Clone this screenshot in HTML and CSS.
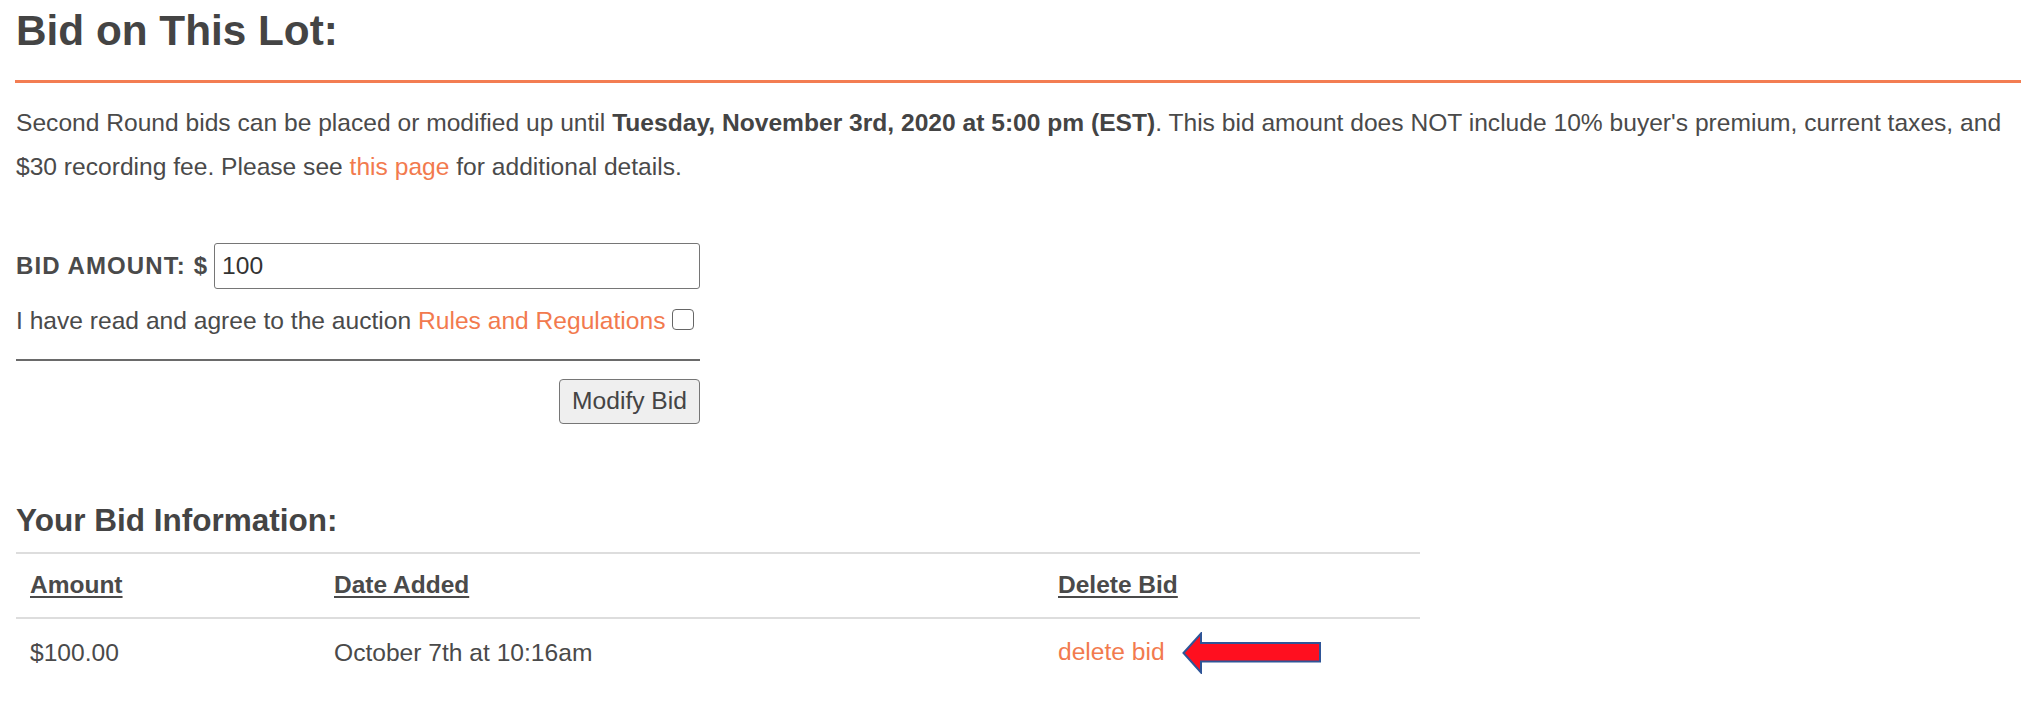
FILE: index.html
```html
<!DOCTYPE html>
<html lang="en">
<head>
<meta charset="utf-8">
<title>Bid on This Lot</title>
<link rel="stylesheet" href="styles.css">
</head>
<body>
<div class="page">
  <h1 class="title">Bid on This Lot:</h1>
  <div class="rule"></div>
  <p class="notice">Second Round bids can be placed or modified up until <strong>Tuesday, November 3rd, 2020 at 5:00 pm (EST)</strong>. This bid amount does NOT include 10% buyer's premium, current taxes, and $30 recording fee. Please see <a href="#" class="link">this page</a> for additional details.</p>

  <form class="bid-form">
    <div class="amount-row">
      <label class="amount-label" for="amt">BID AMOUNT: $</label>
      <input id="amt" class="amount-input" type="text" value="100">
    </div>
    <div class="agree-row">I have read and agree to the auction <a href="#" class="link">Rules and Regulations</a> <input type="checkbox" class="agree-box"></div>
    <div class="divider"></div>
    <div class="actions"><button type="button" class="btn">Modify Bid</button></div>
  </form>

  <h2 class="subtitle">Your Bid Information:</h2>
  <table class="bids">
    <colgroup><col class="c1"><col class="c2"><col class="c3"></colgroup>
    <thead>
      <tr><th><span class="th-u">Amount</span></th><th><span class="th-u">Date Added</span></th><th><span class="th-u">Delete Bid</span></th></tr>
    </thead>
    <tbody>
      <tr>
        <td>$100.00</td>
        <td>October 7th at 10:16am</td>
        <td><a href="#" class="link">delete bid</a><svg class="arrow" width="140" height="42" viewBox="0 0 140 42"><path d="M1.5 21 L19 1.5 L19 11 L138 11 L138 29.5 L19 29.5 L19 40.5 Z" fill="#ff0f1f" stroke="#2f5597" stroke-width="2" stroke-linejoin="miter"/></svg></td>
      </tr>
    </tbody>
  </table>
</div>
</body>
</html>
```

FILE: styles.css
```css
html, body {
  margin: 0;
  padding: 0;
  background: #ffffff;
}

body {
  font-family: "Liberation Sans", Arial, Helvetica, sans-serif;
  color: #4a4a4a;
  font-size: 24.6px;
}

.page {
  padding: 7px 7px 0 16px;
}

.title {
  margin: 0;
  font-size: 42.3px;
  line-height: 48px;
  font-weight: bold;
  color: #444444;
}

.rule {
  margin: 25px 0 0 -1px;
  height: 3px;
  background: #f37d52;
}

.notice {
  margin: 18px 0 0 0;
  line-height: 43.5px;
}

.notice strong {
  font-weight: bold;
  color: #444444;
}

.link {
  color: #f27a4e;
  text-decoration: none;
}

.bid-form {
  margin-top: 55px;
  width: 684px;
}

.amount-row {
  display: flex;
  align-items: center;
  height: 46px;
}

.amount-label {
  font-weight: bold;
  font-size: 24px;
  letter-spacing: 1.1px;
  margin-right: 6px;
  white-space: nowrap;
}

.amount-input {
  flex: 1;
  box-sizing: border-box;
  height: 46px;
  border: 1px solid #767676;
  border-radius: 3px;
  padding: 0 7px;
  font-family: inherit;
  font-size: 24.6px;
  color: #333333;
  outline: none;
}

.agree-row {
  margin-top: 10px;
  line-height: 43.5px;
  white-space: nowrap;
}

.agree-box {
  -webkit-appearance: none;
  appearance: none;
  display: inline-block;
  box-sizing: border-box;
  width: 22px;
  height: 21px;
  margin: 0 0 -1px 0;
  border: 1.5px solid #666666;
  border-radius: 4px;
  background: #ffffff;
  vertical-align: baseline;
}

.divider {
  margin-top: 16px;
  height: 2px;
  background: #6a6a6a;
}

.actions {
  margin-top: 18px;
  display: flex;
  justify-content: flex-end;
}

.btn {
  box-sizing: border-box;
  height: 45px;
  width: 141px;
  padding: 0;
  border: 1px solid #767676;
  border-radius: 4px;
  background: #efefef;
  font-family: inherit;
  font-size: 24.6px;
  color: #444444;
}

.subtitle {
  margin: 78px 0 0 0;
  font-size: 31.5px;
  line-height: 37px;
  font-weight: bold;
  color: #444444;
}

.bids {
  margin-top: 13px;
  width: 1404px;
  border-collapse: collapse;
  table-layout: fixed;
}

.c1 { width: 304px; }
.c2 { width: 724px; }
.c3 { width: 376px; }

.bids th,
.bids td {
  text-align: left;
  padding: 0 14px;
  height: 63px;
  line-height: 28px;
  vertical-align: middle;
  border-top: 2px solid #dddddd;
  white-space: nowrap;
}

.bids td {
  padding-top: 3px;
}

.bids th {
  font-weight: bold;
  font-size: 24.5px;
}

.th-u {
  text-decoration: underline;
  text-underline-offset: 3px;
  text-decoration-thickness: 2px;
}

.arrow {
  display: inline-block;
  vertical-align: middle;
  margin-left: 17px;
}
```
